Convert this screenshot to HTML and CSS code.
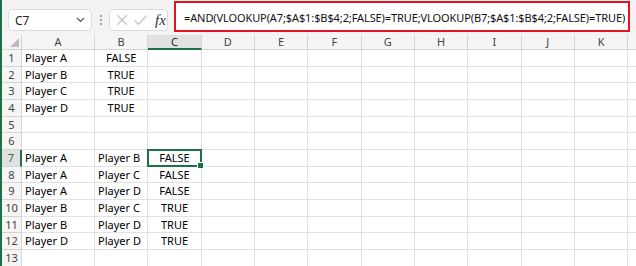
FILE: index.html
```html
<!DOCTYPE html>
<html>
<head>
  <title>VLOOKUP AND</title>
  <link rel="stylesheet" href="styles.css">
</head>
<body>
  <div class="app">
    <div class="formula-bar">
      <div class="name-box">
        <span>C7</span>
        <svg class="chevron" width="9" height="6" viewBox="0 0 9 6"><path d="M1 1 L4.5 4.5 L8 1" fill="none" stroke="#555" stroke-width="1.2"/></svg>
      </div>
      <div class="grip"><i></i><i></i><i></i></div>
      <div class="fx-box">
        <svg width="14" height="14" viewBox="0 0 14 14"><path d="M2 2 L12 12 M12 2 L2 12" stroke="#c4c4c4" stroke-width="1.2" fill="none"/></svg>
        <svg width="15" height="14" viewBox="0 0 15 14"><path d="M1.5 7.5 L5.5 11.5 L13.5 2.5" stroke="#c4c4c4" stroke-width="1.2" fill="none"/></svg>
        <span class="fx">fx</span>
      </div>
      <div class="formula">=AND(VLOOKUP(A7;$A$1:$B$4;2;FALSE)=TRUE;VLOOKUP(B7;$A$1:$B$4;2;FALSE)=TRUE)</div>
    </div>

    <div class="sheet">
      <div class="row head"><div class="corner"></div><div>A</div><div>B</div><div class="sel-col">C</div><div>D</div><div>E</div><div>F</div><div>G</div><div>H</div><div>I</div><div>J</div><div>K</div><div></div></div>
      <div class="row"><div class="rh">1</div><div class="txt">Player A</div><div class="mid">FALSE</div><div></div><div></div><div></div><div></div><div></div><div></div><div></div><div></div><div></div><div></div></div>
      <div class="row"><div class="rh">2</div><div class="txt">Player B</div><div class="mid">TRUE</div><div></div><div></div><div></div><div></div><div></div><div></div><div></div><div></div><div></div><div></div></div>
      <div class="row"><div class="rh">3</div><div class="txt">Player C</div><div class="mid">TRUE</div><div></div><div></div><div></div><div></div><div></div><div></div><div></div><div></div><div></div><div></div></div>
      <div class="row"><div class="rh">4</div><div class="txt">Player D</div><div class="mid">TRUE</div><div></div><div></div><div></div><div></div><div></div><div></div><div></div><div></div><div></div><div></div></div>
      <div class="row"><div class="rh">5</div><div></div><div></div><div></div><div></div><div></div><div></div><div></div><div></div><div></div><div></div><div></div><div></div></div>
      <div class="row"><div class="rh">6</div><div></div><div></div><div></div><div></div><div></div><div></div><div></div><div></div><div></div><div></div><div></div><div></div></div>
      <div class="row"><div class="rh sel-row">7</div><div class="txt">Player A</div><div class="txt">Player B</div><div class="mid active">FALSE</div><div></div><div></div><div></div><div></div><div></div><div></div><div></div><div></div><div></div></div>
      <div class="row"><div class="rh">8</div><div class="txt">Player A</div><div class="txt">Player C</div><div class="mid">FALSE</div><div></div><div></div><div></div><div></div><div></div><div></div><div></div><div></div><div></div></div>
      <div class="row"><div class="rh">9</div><div class="txt">Player A</div><div class="txt">Player D</div><div class="mid">FALSE</div><div></div><div></div><div></div><div></div><div></div><div></div><div></div><div></div><div></div></div>
      <div class="row"><div class="rh">10</div><div class="txt">Player B</div><div class="txt">Player C</div><div class="mid">TRUE</div><div></div><div></div><div></div><div></div><div></div><div></div><div></div><div></div><div></div></div>
      <div class="row"><div class="rh">11</div><div class="txt">Player B</div><div class="txt">Player D</div><div class="mid">TRUE</div><div></div><div></div><div></div><div></div><div></div><div></div><div></div><div></div><div></div></div>
      <div class="row"><div class="rh">12</div><div class="txt">Player D</div><div class="txt">Player D</div><div class="mid">TRUE</div><div></div><div></div><div></div><div></div><div></div><div></div><div></div><div></div><div></div></div>
      <div class="row"><div class="rh">13</div><div></div><div></div><div></div><div></div><div></div><div></div><div></div><div></div><div></div><div></div><div></div><div></div></div>
    </div>
  </div>
</body>
</html>
```

FILE: styles.css
```css
body {
  margin: 0;
  font-family: "Noto Sans", sans-serif;
  background: #fff;
}
.app {
  width: 636px;
  height: 266px;
  overflow: hidden;
  border-left: 2px solid #1e7145;
  box-sizing: border-box;
}
.formula-bar {
  display: flex;
  align-items: flex-start;
  height: 35px;
  background: #f3f3f3;
}
.name-box {
  display: flex;
  align-items: center;
  justify-content: space-between;
  margin: 9px 0 0 6px;
  width: 84px;
  height: 22px;
  box-sizing: border-box;
  padding: 0 6px 0 6px;
  background: #fff;
  border: 1px solid #dcdcdc;
  border-radius: 4px;
  font-size: 12px;
  color: #222;
}
.grip {
  width: 17px;
  height: 35px;
  display: flex;
  flex-direction: column;
  align-items: center;
  justify-content: center;
  gap: 2px;
  padding-top: 4px;
  box-sizing: border-box;
}
.grip i {
  width: 2px;
  height: 2px;
  background: #8a8a8a;
  border-radius: 1px;
}
.fx-box {
  display: flex;
  align-items: center;
  gap: 4px;
  margin-top: 9px;
  width: 59px;
  height: 22px;
  box-sizing: border-box;
  padding: 0 0 0 5px;
  background: #fff;
  border: 1px solid #dcdcdc;
  border-radius: 4px;
}
.fx {
  font-family: "Liberation Serif", serif;
  font-style: italic;
  font-size: 15px;
  color: #333;
  margin-left: 3px;
}
.formula {
  margin: 1px 0 0 6px;
  width: 456px;
  height: 31px;
  box-sizing: border-box;
  border: 2px solid #e81123;
  background: #fff;
  padding: 1px 0 0 8px;
  font-size: 11px;
  letter-spacing: -0.1px;
  line-height: 27px;
  color: #111;
  white-space: nowrap;
  overflow: hidden;
}
.sheet {
  font-size: 11px;
  color: #000;
}
.row {
  display: grid;
  grid-template-columns: 20px 73px repeat(11, 53.33px);
  height: 16.67px;
}
.row > div {
  box-sizing: border-box;
  border-right: 1px solid #e1e1e1;
  border-bottom: 1px solid #e1e1e1;
  line-height: 16px;
  white-space: nowrap;
  overflow: hidden;
}
.row.head {
  height: 15px;
}
.row.head > div {
  background: #f5f5f5;
  border-color: #d4d4d4;
  color: #444;
  text-align: center;
  line-height: 14px;
}
.corner {
  position: relative;
}
.corner::after {
  content: "";
  position: absolute;
  right: 2px;
  bottom: 2px;
  border-left: 9px solid transparent;
  border-bottom: 9px solid #bdbdbd;
}
.row.head > .sel-col {
  background: #e1e1e1;
  border-bottom: 2px solid #1e7145;
  color: #222;
}
.row > .rh {
  background: #f5f5f5;
  border-color: #d4d4d4;
  color: #444;
  text-align: center;
}
.row > .sel-row {
  background: #e1e1e1;
  border-right: 2px solid #1e7145;
  color: #1e7145;
}
.txt {
  padding-left: 3px;
}
.mid {
  text-align: center;
}
.active {
  position: relative;
  overflow: visible !important;
}
.active::before {
  content: "";
  position: absolute;
  left: -1px;
  top: -1px;
  right: -1px;
  bottom: -1px;
  border: 2px solid #1e7145;
}
.active::after {
  content: "";
  position: absolute;
  right: -3px;
  bottom: -3px;
  width: 5px;
  height: 5px;
  background: #1e7145;
  border: 1px solid #fff;
}
```
